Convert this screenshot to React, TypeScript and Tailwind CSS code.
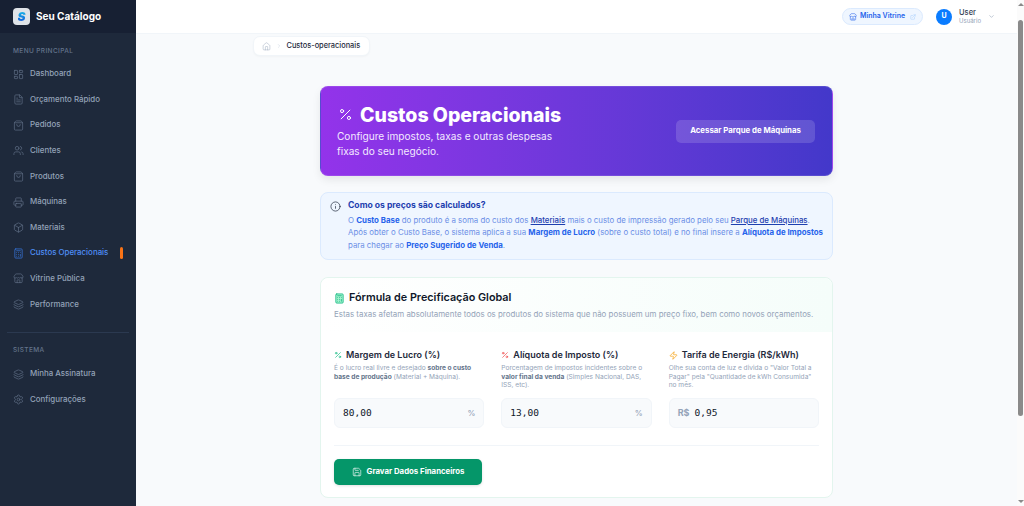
import {
  Calculator,
  Box,
  ChevronDown,
  ChevronRight,
  ExternalLink,
  FileText,
  Home,
  Info,
  Layers,
  LayoutDashboard,
  Percent,
  Printer,
  Save,
  Settings,
  ShoppingBag,
  Store,
  Users,
  Zap,
} from "lucide-react";

const font = "font-['Inter','Noto_Sans',sans-serif]";

const mainMenu = [
  { label: "Dashboard", icon: LayoutDashboard },
  { label: "Orçamento Rápido", icon: FileText },
  { label: "Pedidos", icon: ShoppingBag },
  { label: "Clientes", icon: Users },
  { label: "Produtos", icon: ShoppingBag },
  { label: "Máquinas", icon: Printer },
  { label: "Materiais", icon: Box },
  { label: "Custos Operacionais", icon: Calculator, active: true },
  { label: "Vitrine Pública", icon: Store },
  { label: "Performance", icon: Layers },
];

const systemMenu = [
  { label: "Minha Assinatura", icon: Layers },
  { label: "Configurações", icon: Settings },
];

function NavItem({ item }: { item: { label: string; icon: typeof Box; active?: boolean } }) {
  const Icon = item.icon;
  return (
    <div className={`flex h-[25.6px] items-center gap-[6px] pl-[13px] pr-[13px] text-[7.9px] font-medium ${item.active ? "text-[#4f8ff7]" : "text-[#94a3b8]"}`}>
      <Icon size={11} strokeWidth={1.4} className={`shrink-0 ${item.active ? "text-[#3b82f6]" : "text-[#64748b]"}`} />
      <span className="flex-1 whitespace-nowrap">{item.label}</span>
      {item.active && <span className="h-[12px] w-[3px] shrink-0 rounded-full bg-[#f97316]" />}
    </div>
  );
}

function Sidebar() {
  return (
    <aside className="flex w-[136px] shrink-0 flex-col bg-[#1e293b]">
      <div className="flex h-[33px] shrink-0 items-center gap-[6px] bg-[#172033] pl-[13px]">
        <div className="flex h-[17px] w-[17px] items-center justify-center rounded-[4px] bg-[#dfe3e8]">
          <span className="bg-gradient-to-b from-[#22b8e6] to-[#1d4ed8] bg-clip-text text-[12px] font-black italic leading-none text-transparent">S</span>
        </div>
        <span className="text-[10px] font-bold text-white">Seu Catálogo</span>
      </div>
      <p className="mt-[14px] mb-[4.6px] pl-[13px] text-[6.5px] font-medium tracking-[0.06em] text-[#64748b]">MENU PRINCIPAL</p>
      <nav className="flex flex-col">
        {mainMenu.map((item) => (
          <NavItem item={item} key={item.label} />
        ))}
      </nav>
      <div className="mx-[7px] mt-[14.4px] border-t border-[#2b3950]" />
      <p className="mt-[13px] mb-[6px] pl-[13px] text-[6.5px] font-medium tracking-[0.06em] text-[#64748b]">SISTEMA</p>
      <nav className="flex flex-col">
        {systemMenu.map((item) => (
          <NavItem item={item} key={item.label} />
        ))}
      </nav>
    </aside>
  );
}

function Header() {
  return (
    <header className="flex h-[34px] shrink-0 items-center justify-end border-b border-[#f1f5f9] bg-white pr-[22px]">
      <div className="flex h-[17px] w-[81px] items-center justify-center gap-[3px] rounded-full border border-[#dbeafe] bg-[#eff6ff] text-[7px] font-semibold text-[#2563eb]">
        <Store size={8} strokeWidth={1.6} />
        <span>Minha Vitrine</span>
        <ExternalLink size={6} strokeWidth={1.5} className="ml-[2px] text-[#93c5fd]" />
      </div>
      <div className="ml-[13px] flex h-[16px] w-[16px] items-center justify-center rounded-full bg-[#0a7cff] text-[7px] font-bold text-white">U</div>
      <div className="ml-[7px] flex flex-col leading-none">
        <span className="text-[7.5px] font-medium text-[#334155]">User</span>
        <span className="mt-[1px] text-[6px] text-[#94a3b8]">Usuário</span>
      </div>
      <ChevronDown size={7} className="ml-[7px] text-[#94a3b8]" />
    </header>
  );
}

function Field({
  icon,
  title,
  children,
  value,
  prefix,
  suffix,
}: {
  icon: React.ReactNode;
  title: string;
  children: React.ReactNode;
  value: string;
  prefix?: string;
  suffix?: string;
}) {
  return (
    <div className="flex flex-col">
      <div className="flex h-[12px] items-center gap-[4px] text-[9px] font-semibold text-[#1e293b]">
        {icon}
        <span className="whitespace-nowrap">{title}</span>
      </div>
      <p className="mt-[3px] h-[27px] text-[6.6px] leading-[8.6px] text-[#94a3b8]">{children}</p>
      <div className="mt-[7px] flex h-[30px] items-center rounded-[6px] border border-[#f1f5f9] bg-[#f8fafc] px-[8px]">
        {prefix && <span className="mr-[5px] text-[9px] font-bold text-[#94a3b8]">{prefix}</span>}
        <span className="flex-1 font-['DejaVu_Sans_Mono',monospace] text-[9.5px] font-medium text-[#0f172a]">{value}</span>
        {suffix && <span className="text-[8px] font-medium text-[#94a3b8]">{suffix}</span>}
      </div>
    </div>
  );
}

export default function App() {
  return (
    <div className={`flex h-[506px] w-[1024px] overflow-hidden bg-[#f8fafc] ${font}`}>
      <Sidebar />
      <div className="flex min-w-0 flex-1 flex-col">
        <Header />
        <main className="flex flex-1 flex-col items-center overflow-hidden">
          <div className="mt-[2px] w-[648px]">
            <div className="flex h-[20px] w-[117px] items-center rounded-[7px] border border-[#f1f5f9] bg-white pl-[8px] text-[7.4px] font-medium text-[#1e293b] shadow-[0_1px_2px_rgba(0,0,0,0.03)]">
              <Home size={9} strokeWidth={1.2} className="shrink-0 text-[#94a3b8]" />
              <ChevronRight size={6} className="mx-[5px] shrink-0 text-[#cbd5e1]" />
              <span className="whitespace-nowrap">Custos-operacionais</span>
            </div>
          </div>

          <div className="mt-[30px] flex w-[513px] flex-col">
            <section className="flex h-[90px] items-center justify-between rounded-[8px] border border-white/10 bg-gradient-to-r from-[#9333ea] to-[#4338ca] pl-[16px] pr-[17px] shadow-[0_4px_8px_rgba(0,0,0,0.08)]">
              <div>
                <div className="flex items-center gap-[7px] text-white">
                  <Percent size={15} strokeWidth={1.6} className="ml-[1px]" />
                  <h1 className="whitespace-nowrap text-[19.5px] font-extrabold leading-[22px]">Custos Operacionais</h1>
                </div>
                <p className="mt-[3px] w-[225px] text-[10.1px] leading-[15px] text-[#f3e8ff]">
                  Configure impostos, taxas e outras despesas fixas do seu negócio.
                </p>
              </div>
              <div className="flex h-[23px] w-[139px] items-center justify-center rounded-[5px] bg-white/15 text-[7.8px] font-bold text-white">
                Acessar Parque de Máquinas
              </div>
            </section>

            <section className="mt-[16px] flex h-[68px] gap-[7px] rounded-[8px] border border-[#dbeafe] bg-[#eff6ff] pl-[9px] pr-[6px] pt-[7px]">
              <Info size={11} strokeWidth={1.5} className="mt-[1px] shrink-0 text-[#1e293b]" />
              <div>
                <h3 className="text-[8.6px] font-bold leading-[11px] text-[#1e40af]">Como os preços são calculados?</h3>
                <p className="mt-[3px] whitespace-nowrap text-[7.85px] leading-[12.4px] text-[#6b8fe6]">
                  O <b className="text-[#2563eb]">Custo Base</b> do produto é a soma do custo dos{" "}
                  <u className="font-medium text-[#1e40af]">Materiais</u> mais o custo de impressão gerado pelo seu{" "}
                  <u className="font-medium text-[#1e40af]">Parque de Máquinas</u>.
                  <br />
                  Após obter o Custo Base, o sistema aplica a sua <b className="text-[#2563eb]">Margem de Lucro</b> (sobre o custo total) e no final insere a{" "}
                  <b className="text-[#2563eb]">Alíquota de Impostos</b>
                  <br />
                  para chegar ao <b className="text-[#2563eb]">Preço Sugerido de Venda</b>.
                </p>
              </div>
            </section>

            <section className="mt-[17px] h-[221px] rounded-[8px] border border-[#e3f5ee] bg-white">
              <div className="h-[54px] rounded-t-[8px] bg-gradient-to-r from-white to-[#f5fdfa] pl-[13px] pt-[13px]">
                <div className="flex items-center gap-[4px] text-[#10b981]">
                  <Calculator size={11} strokeWidth={1.8} className="fill-[#a7f3d0]" />
                  <h2 className="text-[10.8px] font-semibold leading-[14px] text-[#0f172a]">Fórmula de Precificação Global</h2>
                </div>
                <p className="mt-[4px] whitespace-nowrap text-[7.9px] leading-[10px] text-[#94a3b8]">
                  Estas taxas afetam absolutamente todos os produtos do sistema que não possuem um preço fixo, bem como novos orçamentos.
                </p>
              </div>
              <div className="px-[13px] pt-[17px]">
                <div className="grid grid-cols-3 gap-[17px]">
                  <Field
                    icon={<Percent size={8} strokeWidth={2} className="text-[#10b981]" />}
                    title="Margem de Lucro (%)"
                    value="80,00"
                    suffix="%"
                  >
                    É o lucro real livre e desejado <b className="text-[#64748b]">sobre o custo base de produção</b> (Material + Máquina).
                  </Field>
                  <Field
                    icon={<Percent size={8} strokeWidth={2} className="text-[#ef4444]" />}
                    title="Alíquota de Imposto (%)"
                    value="13,00"
                    suffix="%"
                  >
                    Porcentagem de impostos incidentes sobre o <b className="text-[#64748b]">valor final da venda</b> (Simples Nacional, DAS, ISS, etc).
                  </Field>
                  <Field
                    icon={<Zap size={9} strokeWidth={1.8} className="text-[#f59e0b]" />}
                    title="Tarifa de Energia (R$/kWh)"
                    value="0,95"
                    prefix="R$"
                  >
                    Olhe sua conta de luz e divida o "Valor Total a Pagar" pela "Quantidade de kWh Consumida" no mês.
                  </Field>
                </div>
                <div className="mt-[17px] border-t border-[#f1f5f9]" />
                <div className="mt-[13px] flex h-[26px] w-[148px] items-center justify-center gap-[5px] rounded-[5px] bg-[#059669] text-[7.8px] font-bold text-white shadow-[0_1px_3px_rgba(0,0,0,0.12)]">
                  <Save size={10} strokeWidth={1.5} />
                  Gravar Dados Financeiros
                </div>
              </div>
            </section>
          </div>
        </main>
      </div>
      {/* page scrollbar */}
      <div className="flex w-[7px] shrink-0 flex-col items-center justify-between bg-[#fbfbfb] py-[3px]">
        <div className="h-0 w-0 border-x-[3px] border-b-[3px] border-x-transparent border-b-[#8a8a8a]" />
        <div className="mb-[84px] mt-[14px] w-[5px] flex-1 rounded-full bg-[#8a8a8a]" />
        <div className="h-0 w-0 border-x-[3px] border-t-[3px] border-x-transparent border-t-[#8a8a8a]" />
      </div>
    </div>
  );
}
